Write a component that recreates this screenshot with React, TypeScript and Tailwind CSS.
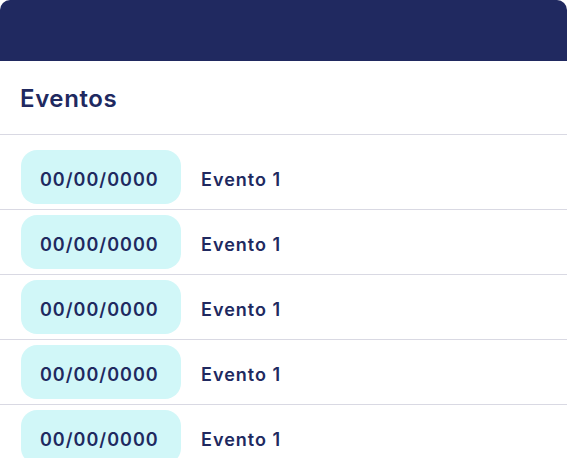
import React from "react";

export default function App() {
  const rows = [0, 1, 2, 3, 4];
  return (
    <div className="w-[567px] h-[458px] overflow-hidden bg-white" style={{ fontFamily: "Inter, 'Noto Sans', sans-serif" }}>
      <div className="h-[61px] bg-[#202960] rounded-t-[10px]" />
      <div className="h-[74px] flex items-center px-5 border-b border-[#d9d9e3]">
        <h1 className="text-[24px] font-semibold text-[#202960] tracking-[0.6px] mt-[2px]">Eventos</h1>
      </div>
      <div className="pt-[10px]">
        {rows.map((i) => (
          <div key={i} className="flex items-center h-[65px] border-b border-[#d9d9e3] px-[21px]">
            <div className="w-[160px] h-[54px] rounded-[16px] bg-[#d1f7f8] flex items-center pl-[19px] pt-[4px] text-[18px] font-semibold tracking-[1px] text-[#202960]">
              00/00/0000
            </div>
            <div className="ml-5 pt-[4px] text-[18px] font-semibold tracking-[1px] text-[#202960]">Evento 1</div>
          </div>
        ))}
      </div>
    </div>
  );
}
